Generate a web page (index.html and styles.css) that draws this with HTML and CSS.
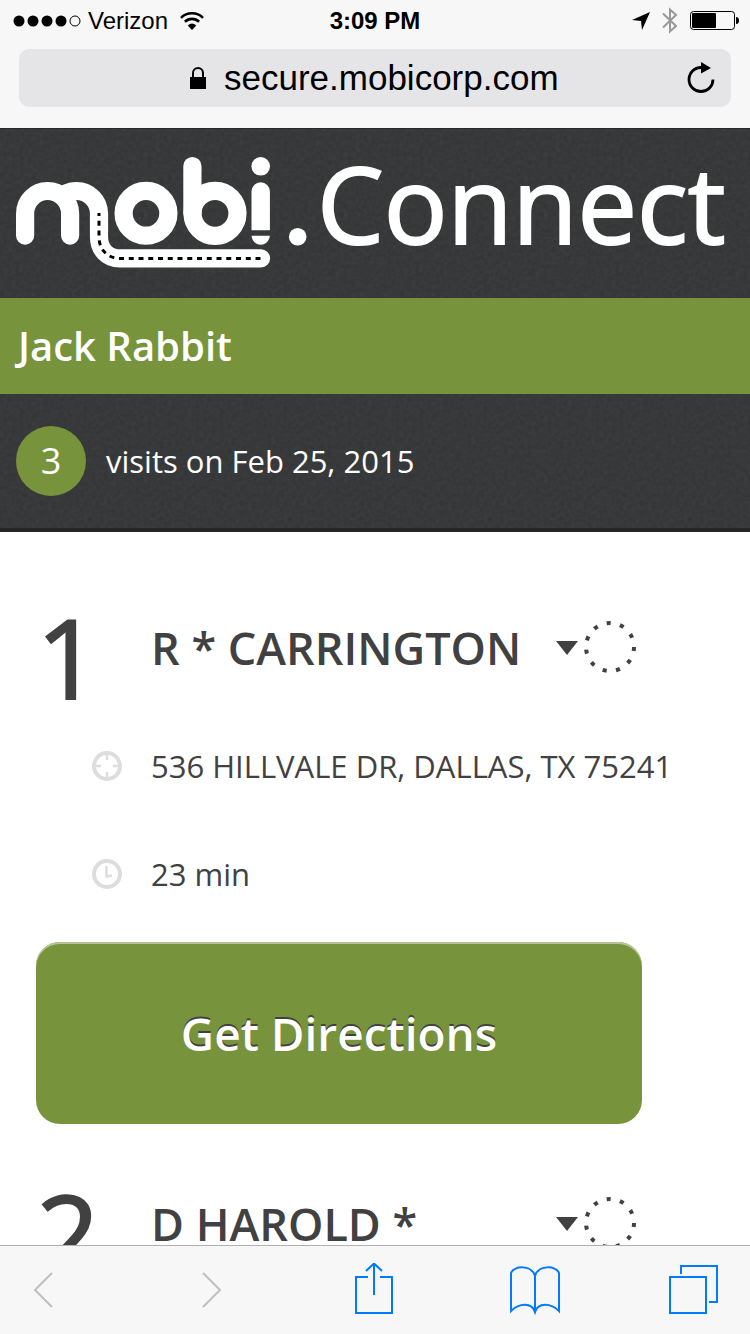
FILE: index.html
```html
<!DOCTYPE html>
<html lang="en">
<head>
<meta charset="utf-8">
<meta name="viewport" content="width=device-width">
<title>mobi.Connect</title>
<link rel="stylesheet" href="styles.css">
</head>
<body>
<div class="screen">
  <header class="browser-top">
    <div class="status-bar">
      <div class="status-left">
        <svg class="icon" width="68" height="12" viewBox="0 0 68 12" aria-hidden="true">
          <circle cx="6" cy="6" r="5.500"/><circle cx="20" cy="6" r="5.500"/><circle cx="34" cy="6" r="5.500"/><circle cx="48" cy="6" r="5.500"/>
          <circle cx="62" cy="6" r="5" fill="none" stroke="#000"/>
        </svg>
        <span class="carrier">Verizon</span>
        <svg class="icon" width="24" height="18" viewBox="0 0 24 18" aria-hidden="true">
          <path d="M1 5.800C7 -.2 17 -.2 23 5.800M4.900 9.800C9 5.900 15 5.900 19.100 9.800" fill="none" stroke="#000" stroke-width="2.600"/>
          <path d="M7.800 13.500Q12 9.500 16.200 13.500L12 18Z"/>
        </svg>
      </div>
      <time class="clock">3:09 PM</time>
      <div class="status-right">
        <svg class="icon" width="18" height="18" viewBox="0 0 18 18" aria-hidden="true"><path d="M18 0L10 18L9 9L0 8Z"/></svg>
        <svg class="icon" width="16" height="27" viewBox="0 0 16 27" aria-hidden="true"><path d="M1 6.500L14 19L8 24.500V2.500L14 8L1 20.500" fill="none" stroke="#999" stroke-width="2"/></svg>
        <svg class="icon" width="49" height="19" viewBox="0 0 49 19" aria-hidden="true">
          <rect x=".5" y=".5" width="44" height="18" rx="3" fill="none" stroke="#000"/>
          <rect x="2" y="2" width="24" height="15" rx="1"/>
          <path d="M46 6Q49 6 49 9.500T46 13Z"/>
        </svg>
      </div>
    </div>
    <div class="address-bar">
      <label class="address">
        <svg class="icon" width="16" height="22" viewBox="0 0 16 22" role="img" aria-label="Secure address">
          <path d="M3 11V6a5 5 0 0 1 10 0v5" fill="none" stroke="#000" stroke-width="2"/><path d="M0 10h16v12H0z"/>
        </svg>
        <input class="address-input" type="text" value="secure.mobicorp.com" aria-label="Address">
      </label>
      <button class="reload" type="button" aria-label="Reload">
        <svg class="icon" width="28" height="32" viewBox="0 0 28 32" aria-hidden="true">
          <path d="M14 5.500A12 12 0 1 0 26 17.500" fill="none" stroke="#000" stroke-width="2.800"/><path d="M14 0L24 6L14 11.500Z"/>
        </svg>
      </button>
    </div>
  </header>

  <main class="page">
    <h1 class="brand textured">
      <svg class="brand-mark" viewBox="16 156 291 112" role="img" aria-label="mobi.">
        <g fill="none" stroke="#fff" stroke-width="18.200" stroke-linecap="round">
          <path d="M25.100 235.600V213.500a22.500 22.500 0 0 1 45 0V235.600"/>
          <path d="M66 193.500Q71 191 76.500 191A22.500 22.500 0 0 1 99 213.500V237C99 249 107 258.400 120 258.400H261"/>
          <circle cx="146" cy="213.300" r="22.400"/>
          <circle cx="215" cy="213.300" r="22.500"/>
          <path d="M192.400 166V213"/>
        </g>
        <g fill="#fff">
          <circle cx="260.700" cy="166.300" r="9.300"/>
          <path d="M251.500 230.300V191.500a9.200 9.200 0 0 1 18.400 0V230.300ZM251.500 235.700H269.900C269 242 265 244.700 260.700 244.700S252.400 242 251.500 235.700Z"/>
          <circle cx="297.700" cy="236.700" r="8.800"/>
        </g>
        <path d="M99 213V237C99 249 107 258.400 120 258.400H261" fill="none" stroke="#000" stroke-width="3" stroke-dasharray="5 4.750" stroke-dashoffset="2"/>
      </svg>
      <span class="brand-name">Connect</span>
    </h1>
    <h2 class="person">Jack Rabbit</h2>
    <p class="summary textured"><span class="count">3</span> <span>visits on Feb 25, 2015</span></p>

    <ol class="visits">
      <li class="visit">
        <div class="visit-head">
          <span class="number">1</span>
          <h3 class="name">R * CARRINGTON</h3>
          <button class="toggle" type="button" aria-label="Show details for R * CARRINGTON">
            <svg class="icon" width="22" height="14" viewBox="0 0 22 14"><path d="M0 0H22L11 14Z"/></svg>
          </button>
          <svg class="spinner" width="54" height="54" viewBox="0 0 54 54" role="img" aria-label="Loading"><circle class="spinner-ring" cx="27" cy="27" r="24" pathLength="110"/></svg>
        </div>
        <p class="detail">
          <svg class="detail-icon" width="30" height="30" viewBox="0 0 30 30" aria-hidden="true"><circle cx="15" cy="15" r="13"/><path d="M15 4V9M15 21V26M4 15H9M21 15H26" stroke-width="2.500"/></svg>
          <span>536 HILLVALE DR, DALLAS, TX 75241</span>
        </p>
        <p class="detail">
          <svg class="detail-icon" width="30" height="30" viewBox="0 0 30 30" aria-hidden="true"><circle cx="15" cy="15" r="13"/><path d="M14.500 7V17.500L20 16.500" stroke-width="2.500"/></svg>
          <span>23 min</span>
        </p>
        <button class="directions" type="button">Get Directions</button>
      </li>
      <li class="visit">
        <div class="visit-head">
          <span class="number">2</span>
          <h3 class="name">D HAROLD *</h3>
          <button class="toggle" type="button" aria-label="Show details for D HAROLD *">
            <svg class="icon" width="22" height="14" viewBox="0 0 22 14"><path d="M0 0H22L11 14Z"/></svg>
          </button>
          <svg class="spinner" width="54" height="54" viewBox="0 0 54 54" role="img" aria-label="Loading"><circle class="spinner-ring" cx="27" cy="27" r="24" pathLength="110"/></svg>
        </div>
      </li>
    </ol>
  </main>

  <nav class="toolbar" aria-label="Browser">
    <button class="tool" type="button" aria-label="Back" disabled><svg width="50" height="54" viewBox="0 0 50 54"><path d="M34 10L17 27L34 44"/></svg></button>
    <button class="tool" type="button" aria-label="Forward" disabled><svg width="50" height="54" viewBox="0 0 50 54"><path d="M16 10L33 27L16 44"/></svg></button>
    <button class="tool" type="button" aria-label="Share"><svg width="50" height="54" viewBox="0 0 50 54"><path d="M19 14H7V50H43V14H31M25 32V1M17 8L25 0.500L33 8"/></svg></button>
    <button class="tool" type="button" aria-label="Bookmarks"><svg width="50" height="54" viewBox="0 0 50 54"><path d="M25 13C22 2 4 2 1 10V48C9 40 22 39 25 49C28 39 41 40 49 48V10C46 2 28 2 25 13V50"/></svg></button>
    <button class="tool" type="button" aria-label="Tabs"><svg width="50" height="54" viewBox="0 0 50 54"><path d="M1 14H37V50H1ZM12 11V3H48V39H40"/></svg></button>
  </nav>
</div>
</body>
</html>
```

FILE: styles.css
```css
* { box-sizing: border-box; }

body {
  margin: 0;
  background: #fff;
  color: #414142;
  font-family: "Trebuchet MS", "Open Sans", sans-serif;
}

h1, h2, h3, p, ol { margin: 0; padding: 0; }

button {
  padding: 0;
  border: 0;
  background: none;
  color: inherit;
  font: inherit;
}

svg { display: block; flex: none; }

.screen {
  display: flex;
  flex-direction: column;
  height: 100vh;
}

/* Browser chrome */
.browser-top {
  flex: none;
  padding-bottom: 21px;
  background: #f7f7f7;
  color: #000;
  font-family: "Helvetica Neue", "Liberation Sans", sans-serif;
}

.status-bar {
  display: grid;
  grid-template-columns: 1fr auto 1fr;
  align-items: center;
  height: 41px;
  padding: 0 11px;
  font-size: 24px;
  line-height: 28px;
}

.status-left, .status-right { display: flex; align-items: center; }
.status-left { gap: 7px; padding-left: 2px; }
.carrier { margin-right: 5px; }
.status-right { justify-content: flex-end; gap: 12px; }
.clock { font-weight: 700; }

.address-bar {
  display: grid;
  grid-template-columns: 1fr auto 1fr;
  align-items: center;
  height: 58px;
  margin: 8px 19px 0;
  padding: 0 16px;
  border-radius: 10px;
  background: #e5e5e7;
}

.address {
  grid-column: 2;
  display: flex;
  align-items: center;
  gap: 18px;
}

.address-input {
  width: 336px;
  padding: 0;
  border: 0;
  background: none;
  color: #000;
  font: 35px/40px "Helvetica Neue", "Liberation Sans", sans-serif;
}

.reload { justify-self: end; }

/* Page header */
.page {
  flex: 1;
  min-height: 0;
  overflow: auto;
  scrollbar-width: none;
}

.textured {
  background-color: #323334;
  background-image: url("data:image/svg+xml,%3Csvg xmlns='http://www.w3.org/2000/svg' width='200' height='200'%3E%3Cfilter id='n'%3E%3CfeTurbulence type='fractalNoise' baseFrequency='.25' numOctaves='2' stitchTiles='stitch'/%3E%3CfeColorMatrix type='saturate' values='0'/%3E%3C/filter%3E%3Crect width='200' height='200' filter='url(%23n)' opacity='.08'/%3E%3C/svg%3E");
}

.brand {
  display: flex;
  align-items: flex-start;
  height: 170px;
  padding: 27px 16px 0;
  border-top: 1px solid #28282a;
  color: #fff;
  font-weight: 400;
}

.brand-mark { width: 291px; height: 112px; }

.brand-name {
  margin-left: 10px;
  font-size: 106px;
  line-height: 94px;
  -webkit-text-stroke: 2px #fff;
}

.person {
  padding: 0 18px;
  background: #77933c;
  color: #fff;
  font-size: 40px;
  font-weight: 600;
  line-height: 96px;
}

.summary {
  display: flex;
  align-items: center;
  gap: 20px;
  height: 138px;
  padding: 0 16px;
  border-bottom: 4px solid #262627;
  color: #fff;
  font-size: 31px;
}

.count {
  width: 70px;
  border-radius: 50%;
  background: #77933c;
  font-size: 36px;
  line-height: 70px;
  text-align: center;
}

/* Visits */
.visits { padding-top: 16px; list-style: none; }
.visit { padding: 52px 0 0 36px; }

.visit-head {
  display: flex;
  align-items: flex-start;
  height: 112px;
  margin-right: 113px;
}

.number {
  width: 64px;
  margin-right: 51px;
  font-size: 110px;
  line-height: 112px;
  text-align: center;
  -webkit-text-stroke: 2px #414142;
}

.name {
  flex: 1;
  font-size: 45px;
  font-weight: 600;
  line-height: 96px;
  white-space: nowrap;
}

.toggle {
  display: flex;
  align-items: center;
  height: 96px;
  margin-right: 5px;
  fill: #414142;
}

.spinner { margin-top: 20px; }

.spinner-ring {
  fill: none;
  stroke: #414142;
  stroke-width: 4;
  stroke-dasharray: 3 7;
}

.detail {
  display: flex;
  align-items: center;
  height: 108px;
  padding-left: 56px;
  gap: 29px;
  font-size: 31px;
  white-space: nowrap;
}

.detail-icon { fill: none; stroke: #ddd; stroke-width: 4; }

.directions {
  display: block;
  width: calc(100% - 108px);
  height: 182px;
  margin-top: 14px;
  border-radius: 24px;
  background: #77933c;
  box-shadow: inset 0 2px 0 #b5c592;
  color: #fff;
  font-size: 46px;
  font-weight: 600;
  text-shadow: 0 -2px 0 #414142;
}

/* Bottom toolbar */
.toolbar {
  flex: none;
  display: grid;
  grid-template-columns: 169fr 162fr 161fr 159fr 50px;
  align-items: center;
  height: 89px;
  padding: 0 31px 0 18px;
  border-top: 1px solid #b0b0b0;
  background: #f7f7f7;
}

.tool {
  width: 50px;
  fill: none;
  stroke: #007aff;
  stroke-width: 2;
}

.tool:disabled { stroke: #bfbfbf; }
```
